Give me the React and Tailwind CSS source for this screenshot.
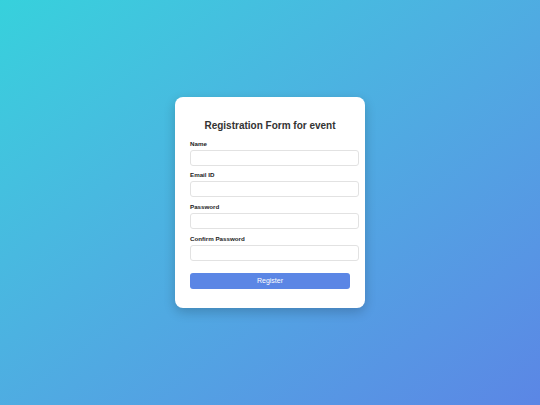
const fields = [
  { label: "Name", type: "text" },
  { label: "Email ID", type: "email" },
  { label: "Password", type: "password" },
  { label: "Confirm Password", type: "password" },
];

const App = () => {
  return (
    <div
      className="w-[540px] h-[405px] flex items-center justify-center bg-gradient-to-br from-[#36d1dc] to-[#5b86e5]"
      style={{ fontFamily: '"Liberation Sans", Arial, sans-serif' }}
    >
      <form className="w-[190px] bg-white rounded-[8px] px-[15px] pt-[23px] pb-[18px] shadow-[0_4px_12px_rgba(0,0,0,0.2)]">
        <h2 className="text-[10px] leading-[12px] font-bold text-[#333] text-center mb-[8px]">
          Registration Form for event
        </h2>
        {fields.map((f) => (
          <div key={f.label} className="mb-[5.67px]">
            <label className="block text-[6.2px] leading-[8px] font-bold text-[#222] mb-[2px]">
              {f.label}
            </label>
            <input
              type={f.type}
              className="block w-[169px] h-[16px] border border-[#e2e2e2] rounded-[3px] bg-white outline-none"
            />
          </div>
        ))}
        <button
          type="button"
          className="mt-[4.33px] w-[160px] h-[16px] rounded-[3px] bg-[#5b86e5] text-white text-[7px] leading-[16px]"
        >
          Register
        </button>
      </form>
    </div>
  );
};

export default App;
